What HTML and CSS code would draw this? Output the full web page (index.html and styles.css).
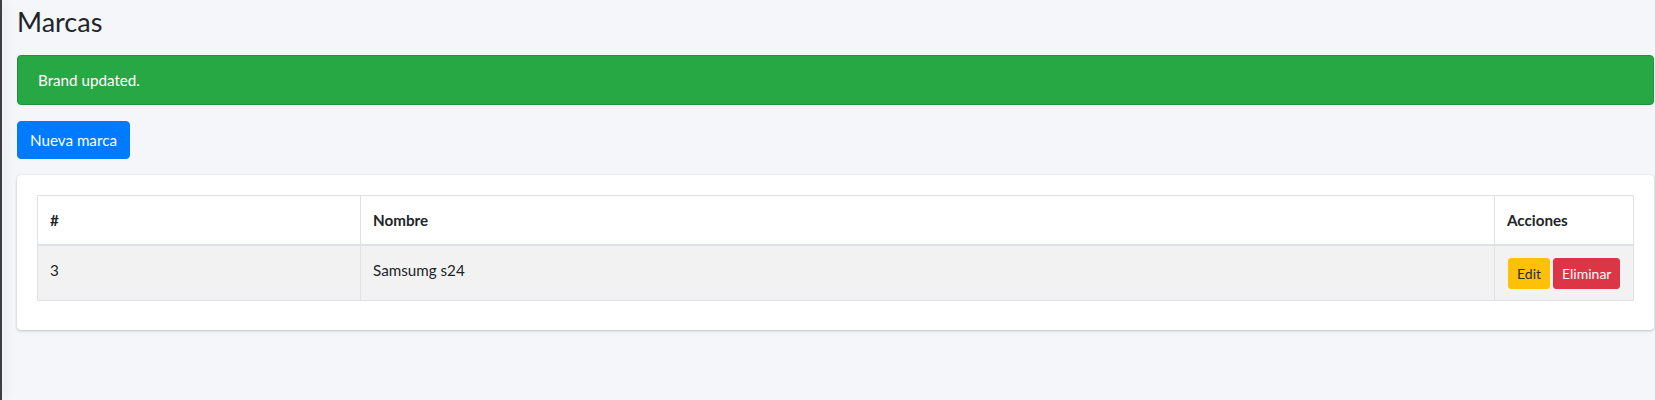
FILE: index.html
```html
<!DOCTYPE html>
<html lang="es">
<head>
<meta charset="utf-8">
<title>Marcas</title>
<link rel="stylesheet" href="styles.css">
</head>
<body>
<div class="layout">
  <div class="sidebar"></div>
  <div class="content-wrapper">
    <h1 class="page-title">Marcas</h1>
    <div class="alert alert-success">Brand updated.</div>
    <div class="toolbar"><a class="btn btn-primary" href="#">Nueva marca</a></div>
    <div class="card">
      <div class="card-body">
        <table class="table">
          <thead>
            <tr>
              <th class="col-id">#</th>
              <th class="col-name">Nombre</th>
              <th class="col-actions">Acciones</th>
            </tr>
          </thead>
          <tbody>
            <tr>
              <td>3</td>
              <td>Samsumg s24</td>
              <td><span class="actions"><a class="btn btn-sm btn-warning" href="#">Edit</a><button class="btn btn-sm btn-danger" type="button">Eliminar</button></span></td>
            </tr>
          </tbody>
        </table>
      </div>
    </div>
  </div>
</div>
</body>
</html>
```

FILE: styles.css
```css
* { box-sizing: border-box; }
html, body { margin: 0; padding: 0; }
body {
  background: #f4f6f9;
  color: #212529;
  font-family: "Lato", "Liberation Sans", sans-serif;
  font-size: 15.2px;
  line-height: 24px;
  height: 400px;
  overflow: hidden;
}
.layout {
  display: flex;
  height: 400px;
}
.sidebar {
  width: 2px;
  flex: 0 0 2px;
  background: #3b4046;
  position: relative;
  z-index: 2;
  box-shadow: 4px 0 10px rgba(0,0,0,0.14);
}
.content-wrapper {
  flex: 1;
  padding: 0 1px 0 15px;
  min-width: 0;
}
.page-title {
  margin: 0;
  padding: 6px 0 0 0;
  font-size: 27px;
  font-weight: 400;
  line-height: 1.2;
  height: 55px;
}
.alert {
  padding: 12px 20px;
  border: 1px solid transparent;
  border-radius: 4px;
  margin-bottom: 16px;
  line-height: 24px;
}
.alert-success {
  background: #28a745;
  border-color: #23923d;
  color: #fff;
}
.toolbar {
  display: flex;
  margin-bottom: 16px;
}
.btn {
  display: inline-block;
  font-family: inherit;
  font-weight: 400;
  text-decoration: none;
  border: 1px solid transparent;
  border-radius: 4px;
  padding: 6px 12px;
  font-size: 15.2px;
  line-height: 24px;
  cursor: pointer;
}
.btn-primary {
  background: #007bff;
  border-color: #007bff;
  color: #fff;
}
.btn-sm {
  padding: 4px 8px;
  font-size: 14px;
  line-height: 21px;
  border-radius: 3px;
}
.btn-warning {
  background: #ffc107;
  border-color: #ffc107;
  color: #1f2d3d;
}
.btn-danger {
  background: #dc3545;
  border-color: #dc3545;
  color: #fff;
}
.actions {
  display: flex;
  gap: 3px;
  padding-left: 1px;
}
.card {
  background: #fff;
  border-radius: 4px;
  box-shadow: 0 0 1px rgba(0,0,0,.125), 0 1px 3px rgba(0,0,0,.2);
}
.card-body {
  padding: 20px 20px 29px 20px;
}
.table {
  width: 100%;
  border-collapse: collapse;
  border: 1px solid #dee2e6;
}
.table th, .table td {
  border: 1px solid #dee2e6;
  padding: 12px;
  text-align: left;
  vertical-align: top;
  line-height: 24px;
}
.table th {
  font-weight: 700;
  border-bottom-width: 2px;
}
.col-id { width: 323px; }
.col-actions { width: 139px; }
.table tbody tr {
  background: #f2f2f2;
}
.table tbody td { padding-bottom: 11px; }
```
